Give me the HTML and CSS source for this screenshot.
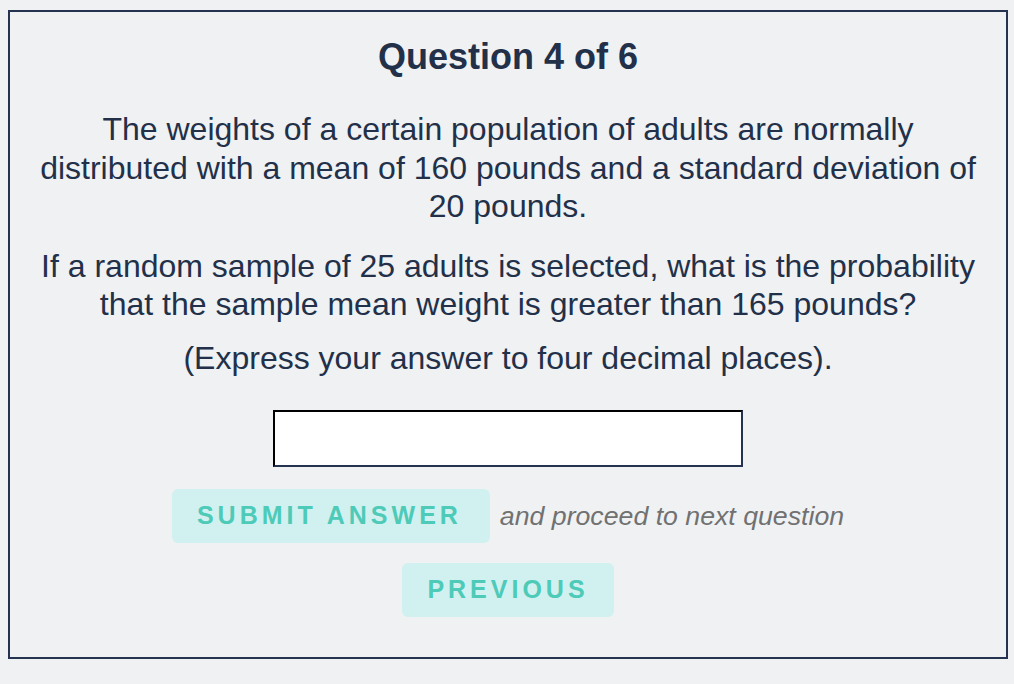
FILE: index.html
```html
<!DOCTYPE html>
<html lang="en">
<head>
<meta charset="utf-8">
<title>Question 4 of 6</title>
<link rel="stylesheet" href="styles.css">
</head>
<body>
<main class="quiz">
  <h1 class="quiz-title">Question 4 of 6</h1>
  <p class="quiz-text">The weights of a certain population of adults are normally distributed with a mean of 160 pounds and a standard deviation of 20 pounds.</p>
  <p class="quiz-text quiz-text-second">If a random sample of 25 adults is selected, what is the probability that the sample mean weight is greater than 165 pounds?</p>
  <p class="quiz-text quiz-text-note">(Express your answer to four decimal places).</p>
  <div class="answer-row">
    <input class="answer-input" type="text" aria-label="Answer">
  </div>
  <div class="submit-row">
    <button class="quiz-btn quiz-btn-submit" type="button">SUBMIT ANSWER</button>
    <span class="submit-hint">and proceed to next question</span>
  </div>
  <div class="prev-row">
    <button class="quiz-btn quiz-btn-prev" type="button">PREVIOUS</button>
  </div>
</main>
</body>
</html>
```

FILE: styles.css
```css
html, body {
  background: #eff1f3;
}
body {
  margin: 10px 6px 0 8px;
  font-family: "Liberation Sans", Arial, Helvetica, sans-serif;
  color: #223049;
}
.quiz {
  box-sizing: border-box;
  width: 1000px;
  height: 649px;
  border: 2px solid #253350;
  padding: 24px 20px 0;
  display: flex;
  flex-direction: column;
  align-items: stretch;
  text-align: center;
}
.quiz-title {
  margin: 0;
  font-size: 36px;
  line-height: 42px;
  font-weight: 700;
}
.quiz-text {
  margin: 32px 0 0;
  font-size: 32px;
  line-height: 38.5px;
}
.quiz-text-second {
  margin-top: 21px;
}
.quiz-text-note {
  margin-top: 15.5px;
}
.answer-row {
  display: flex;
  justify-content: center;
  margin-top: 32.5px;
}
.answer-input {
  box-sizing: border-box;
  width: 470px;
  height: 57px;
  margin: 0;
  background: #fff;
  border-style: solid;
  border-width: 2px;
  border-color: #000 #253350 #253350 #000;
  font: inherit;
  font-size: 28px;
  padding: 0 10px;
}
.submit-row {
  display: flex;
  justify-content: center;
  align-items: center;
  gap: 10px;
  margin-top: 21.5px;
}
.prev-row {
  display: flex;
  justify-content: center;
  margin-top: 20px;
}
.quiz-btn {
  margin: 0;
  border: none;
  border-radius: 6px;
  background: #d0f1ef;
  color: #4ecab8;
  font-family: "Liberation Sans", Arial, Helvetica, sans-serif;
  font-weight: 700;
  font-size: 25px;
  line-height: 29px;
  letter-spacing: 4px;
  padding: 12px 25px 13px 25px;
}
.quiz-btn-submit {
  padding-right: 28px;
}
.submit-hint {
  font-style: italic;
  font-size: 26.7px;
  line-height: 30px;
  color: #717171;
}
```
